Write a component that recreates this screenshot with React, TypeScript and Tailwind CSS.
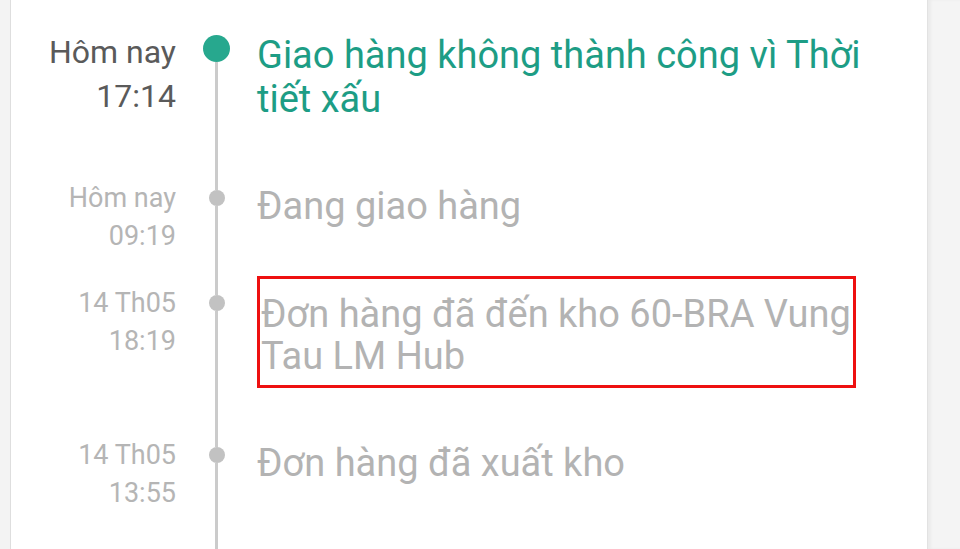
import React from 'react';

type Step = {
  day: string;
  time: string;
  title: string;
};

const steps: Step[] = [
  { day: 'Hôm nay', time: '09:19', title: 'Đang giao hàng' },
  { day: '14 Th05', time: '18:19', title: 'Đơn hàng đã đến kho 60-BRA Vung Tau LM Hub' },
  { day: '14 Th05', time: '13:55', title: 'Đơn hàng đã xuất kho' },
];

const Rail: React.FC<{ first?: boolean }> = ({ first }) => (
  <div className="w-[81px] shrink-0 flex flex-col items-center">
    {first ? (
      <>
        <div className="h-[5px]" />
        <div className="w-[27px] h-[27px] rounded-full bg-[#27a88e]" />
      </>
    ) : (
      <>
        <div className="w-[3px] h-[11px] bg-[#cbcbcb]" />
        <div className="w-[16px] h-[16px] rounded-full bg-[#c2c2c2]" />
      </>
    )}
    <div className="w-[3px] flex-1 bg-[#cbcbcb]" />
  </div>
);

const App: React.FC = () => {
  return (
    <div
      className="flex h-[549px] w-[960px] overflow-hidden bg-white"
      style={{ fontFamily: 'Roboto, "Noto Sans", sans-serif' }}
    >
      <div className="w-[11px] shrink-0 bg-[#f3f3f3] border-r border-[#dedede]" />

      <div className="flex-1 flex flex-col pt-[30px]">
        {/* current status */}
        <div className="flex">
          <div className="w-[165px] shrink-0 text-right text-[32px] leading-[44px] text-[#5a5a5a]">
            <div>Hôm nay</div>
            <div>17:14</div>
          </div>
          <Rail first />
          <div className="flex-1 pr-[36px] pt-[3px] pb-[58px] text-[38px] leading-[44px] text-[#1d9d85]">
            Giao hàng không thành công vì Thời tiết xấu
          </div>
        </div>

        {steps.map((s, i) => (
          <div key={i} className={`flex ${i === steps.length - 1 ? 'flex-1' : ''}`}>
            <div className="w-[165px] shrink-0 text-right text-[27px] leading-[38px] text-[#b5b5b5]">
              <div>{s.day}</div>
              <div>{s.time}</div>
            </div>
            <Rail />
            {i === 1 ? (
              <div className="flex-1 pr-[36px]">
                <div className="w-[599px] -mt-[8px] mb-[48px] border-[3px] border-[#ee1010] pl-[1px] pt-[14px] pb-[8px] text-[38px] leading-[42px] text-[#b3b3b3]">
                  {s.title}
                </div>
              </div>
            ) : (
              <div className="flex-1 pr-[36px] pt-[6px] pb-[56px] text-[38px] leading-[43px] text-[#b3b3b3]">
                {s.title}
              </div>
            )}
          </div>
        ))}
      </div>

      <div className="w-[33px] shrink-0 bg-[#f4f4f4] border-l border-[#e2e2e2] shadow-[inset_3px_0_3px_rgba(0,0,0,0.04)]" />
    </div>
  );
};

export default App;
